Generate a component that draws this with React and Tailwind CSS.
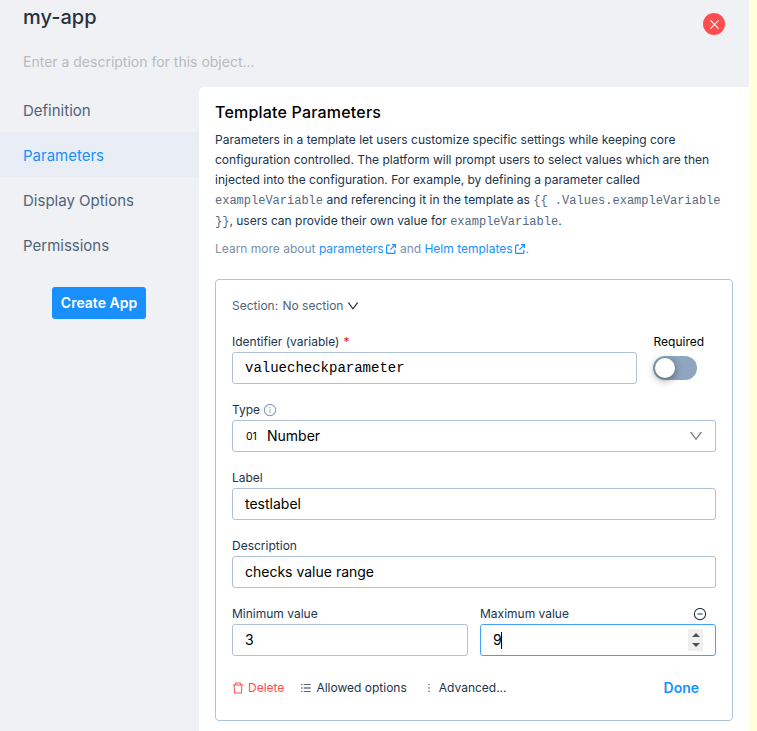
import { AiOutlineDelete, AiOutlineUnorderedList, AiOutlineMore, AiOutlineInfoCircle, AiOutlineDown, AiOutlineMinusCircle, AiOutlineClose } from "react-icons/ai";

const inputClass = "flex h-8 items-center rounded-[3px] border border-[#b0c2d8] bg-white px-3 text-sm text-black";
const labelClass = "flex h-[21px] items-center text-xs leading-[21px] text-[#20344c]";

function ExternalIcon() {
  return (
    <svg className="ml-0.5 mr-px inline-block align-[-1px]" width="10" height="10" viewBox="0 0 10 10" fill="none" stroke="currentColor" strokeWidth="1.2">
      <path d="M4 1.1H1.6a1 1 0 0 0-1 1V8.4a1 1 0 0 0 1 1h6.3a1 1 0 0 0 1-1V6" />
      <path d="M6 .6H9.4V4M9.4.6L4.4 5.6" />
    </svg>
  );
}

function Code({ children }) {
  return <code className="font-['Liberation_Mono',monospace] text-xs leading-5 text-[#56697f]">{children}</code>;
}

function Field({ label, value }) {
  return (
    <div>
      <div className={labelClass}>{label}</div>
      <div className={inputClass}>{value}</div>
    </div>
  );
}

function Sidebar() {
  return (
    <nav className="w-[199px] shrink-0 text-[15px] text-[#4f6479]">
      <div className="flex h-[45px] items-center pl-[23px] pt-[3px]">Definition</div>
      <div className="flex h-[45px] items-center bg-[#e8edf6] pl-[23px] pt-[3px] text-[#1890ff]">Parameters</div>
      <div className="flex h-[45px] items-center pl-[23px] pt-[3px]">Display Options</div>
      <div className="flex h-[45px] items-center pl-[23px] pt-[3px]">Permissions</div>
      <button className="ml-[52px] mt-5 flex h-8 w-[94px] items-center justify-center rounded-[3px] bg-[#1890ff] text-sm font-semibold text-white">Create App</button>
    </nav>
  );
}

function ParameterCard() {
  return (
    <section className="mt-5 h-[442px] w-[518px] rounded-[4px] border border-[#b0c2d8] px-4 pt-[15px]">
      <div className="flex h-[21px] items-center text-xs text-[#4f6479]">
        <span>Section: <span className="ml-px">No section</span></span>
        <AiOutlineDown className="ml-[3px] text-[#222]" size={14} />
      </div>
      <div className="mt-[15px] flex justify-between">
        <div className="w-[405px]">
          <div className={labelClass}>Identifier (variable)<span className="ml-1 text-[#e02020]">*</span></div>
          <div className={inputClass}><span className="font-['Liberation_Mono',monospace] text-sm">valuecheckparameter</span></div>
        </div>
        <div className="w-[63px]">
          <div className="flex h-[21px] items-center pl-[0.5px] pt-px text-xs text-black">Required</div>
          <div className="mt-1 flex h-6 w-11 items-center rounded-full bg-[#8fa6c1] px-[1.5px]">
            <span className="h-5 w-5 rounded-full bg-white shadow-[0_2px_8px_rgba(0,0,0,0.45)]" />
          </div>
        </div>
      </div>
      <div className="mt-[15px]">
        <div className={labelClass}>Type<AiOutlineInfoCircle className="ml-[3px] text-[#829ab5]" size={14} /></div>
        <div className={inputClass}>
          <span className="w-[22px] pl-px text-[10.5px] text-black">01</span>
          <span className="flex-1">Number</span>
          <AiOutlineDown className="-mr-px text-[#777]" size={16} />
        </div>
      </div>
      <div className="mt-[15px] flex flex-col gap-[15px]">
        <Field label="Label" value="testlabel" />
        <Field label="Description" value="checks value range" />
      </div>
      <div className="mt-[15px] grid grid-cols-2 gap-3">
        <Field label="Minimum value" value="3" />
        <div>
          <div className={labelClass}><span className="flex-1">Maximum value</span><AiOutlineMinusCircle className="mr-[9px]" size={14} /></div>
          <div className="flex h-8 items-center rounded-[3px] border border-[#40a0ff] pl-3 pr-3 text-sm text-black">
            <span>9</span><span className="-ml-px h-[17px] w-px bg-black" />
            <span className="ml-auto flex h-[22px] w-[15px] flex-col items-center justify-center gap-1.5 bg-[#efefef]">
              <svg width="8" height="4" viewBox="0 0 8 4" fill="#505050"><path d="M0 4L4 0L8 4Z" /></svg>
              <svg width="8" height="4" viewBox="0 0 8 4" fill="#505050"><path d="M0 0L4 4L8 0Z" /></svg>
            </span>
          </div>
        </div>
      </div>
      <div className="mt-[21px] flex h-[22px] items-center text-xs text-[#20344c]">
        <span className="flex items-center text-[#ff4d4f]"><AiOutlineDelete className="-ml-px mr-[3px]" size={14} />Delete</span>
        <span className="ml-4 flex items-center"><AiOutlineUnorderedList className="mr-1" size={12} />Allowed options</span>
        <span className="ml-4 flex items-center"><AiOutlineMore className="mr-1" size={12} />Advanced...</span>
        <span className="ml-auto mr-[17px] text-sm font-semibold text-[#1890ff]">Done</span>
      </div>
    </section>
  );
}

export default function App() {
  return (
    <div className="h-[731px] w-[757px] overflow-hidden bg-[#ffffdb] font-['Inter',sans-serif]">
      <div className="h-full w-[749px] bg-[#f0f1f5]">
        <header className="flex h-[87px] justify-between pl-[23px] pr-6">
          <div>
            <h1 className="mt-[3px] text-xl font-medium leading-7 text-[#25323e]">my-app</h1>
            <p className="mt-5 text-sm leading-[22px] text-[#b8babd]">Enter a description for this object...</p>
          </div>
          <button className="mt-[13px] flex h-[22px] w-[22px] items-center justify-center rounded-full bg-[#ff4d4f] text-white"><AiOutlineClose size={13} /></button>
        </header>
        <div className="flex h-[644px]">
          <Sidebar />
          <main className="w-[550px] rounded-tl-[5px] bg-white px-4 pt-[13px]">
            <h2 className="text-base font-medium leading-6 tracking-[0.2px] text-black">Template Parameters</h2>
            <p className="mt-1.5 w-[518px] text-xs leading-5 text-[#20344c]">
              Parameters in a template let users customize specific settings while keeping core configuration controlled. The platform will prompt users to select values which are then injected into the configuration. For example, by defining a parameter called <Code>exampleVariable</Code> and referencing it in the template as <Code>{"{{ .Values.exampleVariable }}"}</Code>, users can provide their own value for <Code>exampleVariable</Code>.
            </p>
            <p className="mt-[7px] text-xs leading-5 text-[#7890aa]">
              Learn more about <a className="text-[#1890ff]">parameters<ExternalIcon /></a> and <a className="text-[#1890ff]">Helm templates<ExternalIcon /></a>.
            </p>
            <ParameterCard />
          </main>
        </div>
      </div>
    </div>
  );
}
